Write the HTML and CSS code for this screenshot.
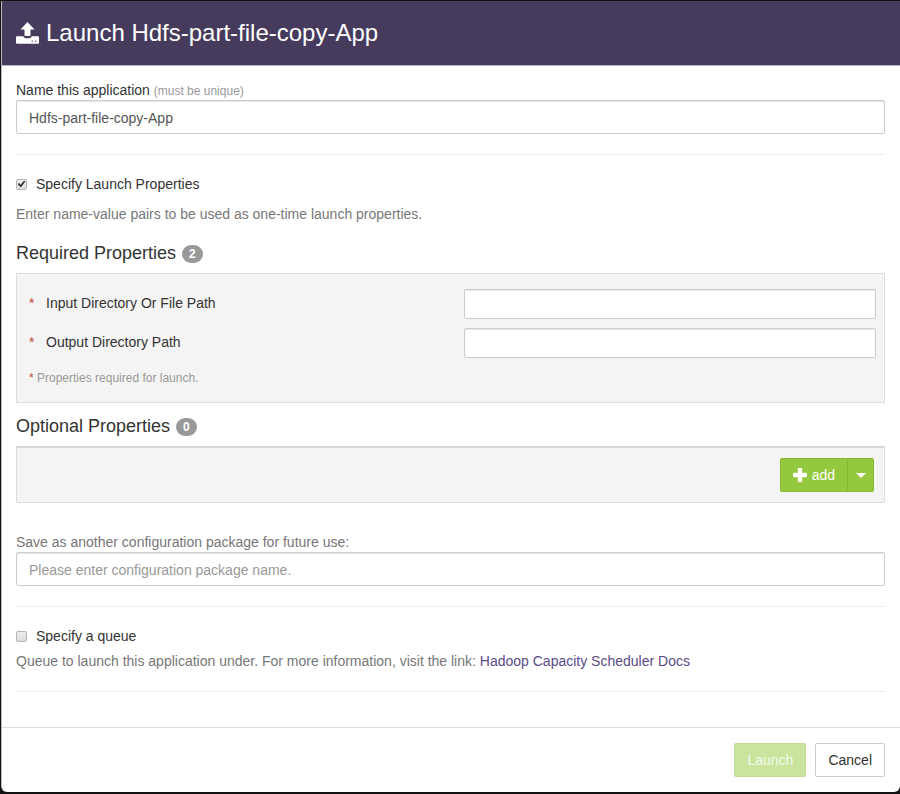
FILE: index.html
```html
<!DOCTYPE html>
<html lang="en">
<head>
<meta charset="utf-8">
<title>Launch Hdfs-part-file-copy-App</title>
<link rel="stylesheet" href="styles.css">
</head>
<body>
<form class="modal">
  <header class="modal-header">
    <svg class="title-icon" viewBox="0 0 23 22" aria-hidden="true">
      <path fill="#fff" d="M11.500 0 18.500 7.500H14.500V13Q14.500 14 13.500 14H9.500Q8.500 14 8.500 13V7.500H4.500ZM1 14.300H7.200Q8 16.200 9.800 16.200H13.200Q15 16.200 15.800 14.300H22Q23 14.300 23 15.300V20.700Q23 21.700 22 21.700H1Q0 21.700 0 20.700V15.300Q0 14.300 1 14.300Z"/>
      <path fill="#8c84a0" d="M15.500 18.400h1.500v1.500h-1.500zM19 18.400h1.500v1.500H19z"/>
    </svg>
    <h1 class="modal-title">Launch Hdfs-part-file-copy-App</h1>
  </header>

  <div class="modal-body">
    <div class="field">
      <label for="app-name">Name this application <small class="hint">(must be unique)</small></label>
      <input class="text-input" id="app-name" type="text" value="Hdfs-part-file-copy-App">
    </div>
    <hr class="divider">

    <div class="check-row">
      <input class="checkbox" id="specify-properties" type="checkbox" checked>
      <label for="specify-properties">Specify Launch Properties</label>
    </div>
    <p class="help help-spaced">Enter name-value pairs to be used as one-time launch properties.</p>

    <h2 class="section-title">Required Properties <span class="badge">2</span></h2>
    <div class="panel required-panel">
      <div class="property">
        <label class="property-name" for="input-path"><span class="star">*</span>Input Directory Or File Path</label>
        <input class="text-input compact" id="input-path" type="text">
      </div>
      <div class="property">
        <label class="property-name" for="output-path"><span class="star">*</span>Output Directory Path</label>
        <input class="text-input compact" id="output-path" type="text">
      </div>
      <p class="hint note"><span class="asterisk">*</span> Properties required for launch.</p>
    </div>

    <h2 class="section-title">Optional Properties <span class="badge">0</span></h2>
    <div class="panel optional-panel">
      <div class="button-group">
        <button class="btn btn-add" type="button">
          <svg class="plus-icon" viewBox="0 0 14 14" aria-hidden="true"><path fill="#fff" d="M5.500 0h3q.7 0 .7.700v4.100h4.100q.7 0 .7.700v3q0 .7-.7.700H9.200v4.100q0 .7-.7.700h-3q-.7 0-.7-.7V9.200H.7Q0 9.200 0 8.500v-3q0-.7.700-.7h4.100V.7q0-.7.700-.7z"/></svg>
          add
        </button>
        <button class="btn btn-caret" type="button" aria-label="More add options"><span class="caret"></span></button>
      </div>
    </div>

    <div class="field package-field">
      <label class="help" for="package-name">Save as another configuration package for future use:</label>
      <input class="text-input" id="package-name" type="text" placeholder="Please enter configuration package name.">
    </div>
    <hr class="divider">

    <div class="check-row">
      <input class="checkbox" id="specify-queue" type="checkbox">
      <label for="specify-queue">Specify a queue</label>
    </div>
    <p class="help queue-help">Queue to launch this application under. For more information, visit the link: <a class="link" href="#">Hadoop Capacity Scheduler Docs</a></p>
    <hr class="divider">
  </div>

  <footer class="modal-footer">
    <button class="btn btn-launch" type="submit" disabled>Launch</button>
    <button class="btn btn-cancel" type="button">Cancel</button>
  </footer>
</form>
</body>
</html>
```
FILE: styles.css
```css
* {
  box-sizing: border-box;
}

body {
  margin: 0;
  padding: 1px 0 1px 1px;
  background: #111;
  color: #333;
  font: 14px/20px "Liberation Sans", Arial, sans-serif;
}

h1, h2, p {
  margin: 0;
  font-weight: normal;
}

input, button {
  font: inherit;
}

.modal {
  overflow: hidden;
  background: #fff;
  border-left: 1px solid #bbb;
  border-radius: 0 0 6px 6px;
}

.modal-header {
  display: flex;
  align-items: center;
  gap: 7px;
  height: 65px;
  padding: 0 14px;
  background: #463b5d;
  border-bottom: 1px solid #b9b3c6;
}

.title-icon {
  width: 23px;
  height: 22px;
}

.modal-title {
  color: #fff;
  font-size: 24px;
  line-height: 32px;
}

.modal-body {
  padding: 14px 15px 16px 14px;
}

.field {
  display: flex;
  flex-direction: column;
}

.hint {
  color: #999;
  font-size: 12px;
}

small.hint {
  line-height: 12px;
}

.text-input {
  width: 100%;
  height: 34px;
  padding: 2px 12px 0;
  background: #fff;
  border: 1px solid #ccc;
  border-radius: 2px;
  box-shadow: inset 0 1px 1px #e8e8e8;
  color: #555;
}

.text-input::placeholder {
  color: #999;
  opacity: 1;
}

.compact {
  height: 30px;
}

.divider {
  margin: 20px 0 19px;
  border: 0;
  border-top: 1px solid #eee;
}

.check-row {
  display: flex;
  align-items: center;
  gap: 9px;
}

.checkbox {
  appearance: none;
  display: grid;
  place-items: center;
  width: 11px;
  height: 11px;
  margin: 0;
  background: linear-gradient(#eee, #ddd);
  border: 1px solid #b4b4b4;
  border-radius: 2px;
}

.checkbox:checked::before {
  content: "";
  width: 8px;
  height: 7px;
  background: #333;
  clip-path: polygon(0 50%, 20% 35%, 38% 60%, 82% 0, 100% 12%, 42% 100%);
}

.help {
  color: #777;
}

.help-spaced {
  margin: 10px 0 19px;
}

.section-title {
  display: flex;
  align-items: center;
  gap: 6px;
  margin-bottom: 10px;
  font-size: 18px;
}

.badge {
  margin-top: 2px;
  padding: 3px 7px;
  background: #999;
  border-radius: 9px;
  color: #fff;
  font-size: 12px;
  font-weight: bold;
  line-height: 12px;
}

.panel {
  background: #f4f4f4;
  border: 1px solid #ddd;
}

.required-panel {
  display: flex;
  flex-direction: column;
  gap: 9px;
  margin-bottom: 13px;
  padding: 15px 8px 14px 12px;
}

.note {
  padding-top: 1px;
}

.property {
  display: grid;
  grid-template-columns: 19fr 18fr;
}

.property-name {
  display: flex;
  padding-top: 4px;
}

.star {
  width: 17px;
  color: #b94a48;
}

.asterisk {
  color: #b94a48;
}

.optional-panel {
  display: flex;
  justify-content: flex-end;
  padding: 10px;
  border-top: 2px solid #d8d8d8;
  border-radius: 0 0 2px 2px;
}

.btn {
  display: flex;
  align-items: center;
  justify-content: center;
  height: 34px;
  padding: 0 12px;
  border: 1px solid #ccc;
  border-radius: 2px;
}

.button-group {
  display: flex;
}

.btn-add,
.btn-caret {
  background: #95c93d;
  border-color: #86b833;
  color: #fff;
}

.btn-add {
  gap: 5px;
  border-radius: 2px 0 0 2px;
}

.btn-caret {
  width: 27px;
  margin-left: -1px;
  padding: 0;
  border-radius: 0 2px 2px 0;
}

.plus-icon {
  width: 14px;
  height: 14px;
}

.caret {
  border: 5px solid transparent;
  border-top-color: #fff;
  border-bottom: 0;
}

.package-field {
  margin-top: 29px;
}

.queue-help {
  margin-top: 5px;
}

.link {
  color: #5b4a86;
  text-decoration: none;
}

.modal-footer {
  display: flex;
  justify-content: flex-end;
  gap: 9px;
  padding: 15px;
  border-top: 1px solid #ddd;
}

.btn-launch {
  background: #cae49e;
  border-color: #c2db99;
  color: #f5faeb;
}

.btn-cancel {
  background: #fff;
  color: #333;
}
```
